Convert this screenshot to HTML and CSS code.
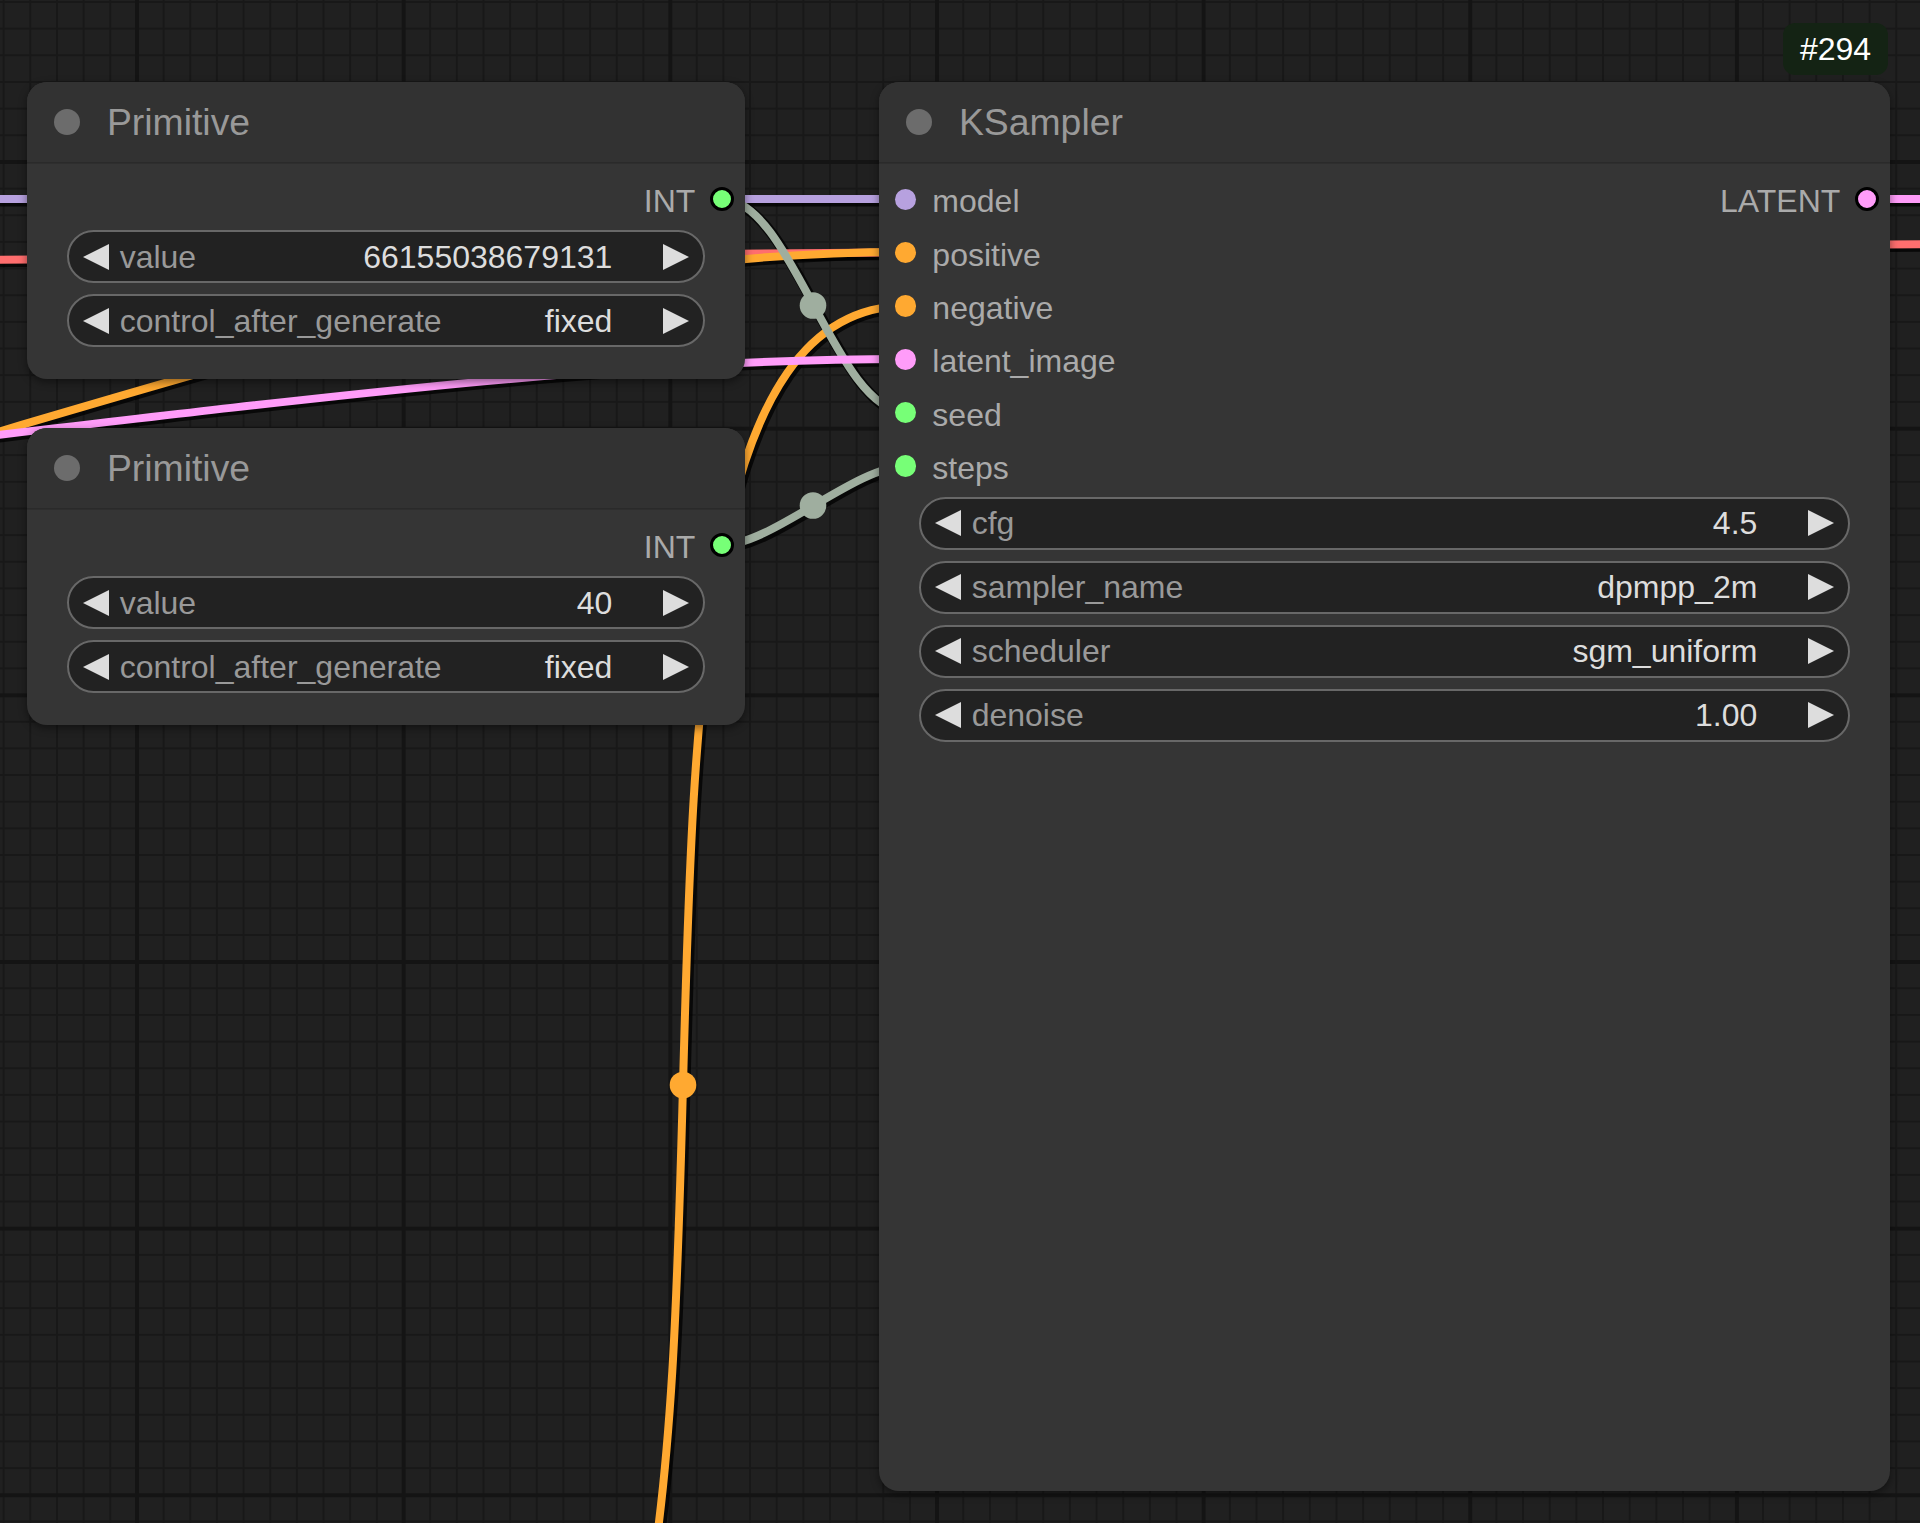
FILE: index.html
```html
<!DOCTYPE html>
<html lang="en">
<head>
<meta charset="utf-8">
<title>ComfyUI – KSampler</title>
<link rel="stylesheet" href="styles.css">
</head>
<body>
<div class="canvas">
  <svg class="links" width="1920" height="1523" viewBox="0 0 1920 1523">
    <g class="shadow">
      <path d="M-20 260 L1940 244"/>
      <path d="M-20 199 L906 199"/>
      <path d="M-200 490 C300 345 560 252 906 252"/>
      <path d="M460 1864 C865 1864 501 306 906 306"/>
      <path d="M722 199 C792 199 835.3 412 906 412"/>
      <path d="M722 545 C772 545 855.5 466 906 466"/>
      <path d="M-300 470 C300 400 600 359 906 359"/>
      <path d="M1866 199 L1940 199"/>
    </g>
    <path class="link vae" d="M-20 260 L1940 244"/>
    <path class="link model" d="M-20 199 L906 199"/>
    <path class="link cond" d="M-200 490 C300 345 560 252 906 252"/>
    <path class="link cond" d="M460 1864 C865 1864 501 306 906 306"/>
    <circle class="mid cond-fill" cx="683" cy="1085" r="13.3"/>
    <path class="link int" d="M722 199 C792 199 835.3 412 906 412"/>
    <circle class="mid int-fill" cx="813" cy="305.5" r="13.3"/>
    <path class="link int" d="M722 545 C772 545 855.5 466 906 466"/>
    <circle class="mid int-fill" cx="813" cy="505.5" r="13.3"/>
    <path class="link latent" d="M-300 470 C300 400 600 359 906 359"/>
    <path class="link latent" d="M1866 199 L1940 199"/>
  </svg>

  <div class="node node-prim node-prim-a">
    <div class="title"><span class="title-dot"></span><span class="title-text">Primitive</span></div>
    <div class="body">
      <div class="slot-row out-only">
        <div class="output"><span class="slot-label">INT</span><span class="dot dot-out c-int"></span></div>
      </div>
      <div class="widgets">
        <div class="widget"><span class="arrow-l"></span><span class="wlabel">value</span><span class="wvalue">66155038679131</span><span class="arrow-r"></span></div>
        <div class="widget"><span class="arrow-l"></span><span class="wlabel">control_after_generate</span><span class="wvalue">fixed</span><span class="arrow-r"></span></div>
      </div>
    </div>
  </div>

  <div class="node node-prim node-prim-b">
    <div class="title"><span class="title-dot"></span><span class="title-text">Primitive</span></div>
    <div class="body">
      <div class="slot-row out-only">
        <div class="output"><span class="slot-label">INT</span><span class="dot dot-out c-int"></span></div>
      </div>
      <div class="widgets">
        <div class="widget"><span class="arrow-l"></span><span class="wlabel">value</span><span class="wvalue">40</span><span class="arrow-r"></span></div>
        <div class="widget"><span class="arrow-l"></span><span class="wlabel">control_after_generate</span><span class="wvalue">fixed</span><span class="arrow-r"></span></div>
      </div>
    </div>
  </div>

  <div class="node node-ks">
    <div class="title"><span class="title-dot"></span><span class="title-text">KSampler</span></div>
    <div class="body">
      <div class="slot-row">
        <div class="input"><span class="dot c-model"></span><span class="slot-label">model</span></div>
        <div class="output"><span class="slot-label">LATENT</span><span class="dot dot-out c-latent"></span></div>
      </div>
      <div class="slot-row">
        <div class="input"><span class="dot c-cond"></span><span class="slot-label">positive</span></div>
      </div>
      <div class="slot-row">
        <div class="input"><span class="dot c-cond"></span><span class="slot-label">negative</span></div>
      </div>
      <div class="slot-row">
        <div class="input"><span class="dot c-latent"></span><span class="slot-label">latent_image</span></div>
      </div>
      <div class="slot-row">
        <div class="input"><span class="dot c-int"></span><span class="slot-label">seed</span></div>
      </div>
      <div class="slot-row">
        <div class="input"><span class="dot c-int"></span><span class="slot-label">steps</span></div>
      </div>
      <div class="widgets">
        <div class="widget"><span class="arrow-l"></span><span class="wlabel">cfg</span><span class="wvalue">4.5</span><span class="arrow-r"></span></div>
        <div class="widget"><span class="arrow-l"></span><span class="wlabel">sampler_name</span><span class="wvalue">dpmpp_2m</span><span class="arrow-r"></span></div>
        <div class="widget"><span class="arrow-l"></span><span class="wlabel">scheduler</span><span class="wvalue">sgm_uniform</span><span class="arrow-r"></span></div>
        <div class="widget"><span class="arrow-l"></span><span class="wlabel">denoise</span><span class="wvalue">1.00</span><span class="arrow-r"></span></div>
      </div>
    </div>
  </div>

  <div class="badge">#294</div>
</div>
</body>
</html>
```

FILE: styles.css
```css
html, body {
  margin: 0;
  padding: 0;
  width: 1920px;
  height: 1523px;
  overflow: hidden;
  background: #202020;
}

.canvas {
  position: relative;
  width: 1920px;
  height: 1523px;
  overflow: hidden;
  font-family: "Liberation Sans", Arial, sans-serif;
  background-color: #202020;
  background-image:
    linear-gradient(to right, #141414 4px, transparent 4px),
    linear-gradient(to bottom, #141414 4px, transparent 4px),
    linear-gradient(to right, #181818 2px, transparent 2px),
    linear-gradient(to bottom, #181818 2px, transparent 2px);
  background-size:
    266.667px 266.667px,
    266.667px 266.667px,
    26.6667px 26.6667px,
    26.6667px 26.6667px;
  background-position:
    135px 0,
    0 160px,
    2.67px 0,
    0 1px;
}

/* ---------- links ---------- */
.links {
  position: absolute;
  left: 0;
  top: 0;
}
.shadow path {
  fill: none;
  stroke: rgba(0, 0, 0, 0.75);
  stroke-width: 11;
  transform: translate(2px, 2px);
}
.link {
  fill: none;
  stroke-width: 8;
}
.vae { stroke: #ff6e6e; }
.model { stroke: #b7a1df; }
.cond { stroke: #ffa931; }
.int { stroke: #9fae9f; }
.latent { stroke: #ff9cf9; }
.cond-fill { fill: #ffa931; }
.int-fill { fill: #9fae9f; }

/* ---------- nodes ---------- */
.node {
  position: absolute;
  background: #353535;
  border-radius: 20px;
  box-shadow: 0 3px 8px rgba(0, 0, 0, 0.45);
  overflow: hidden;
}
.node-prim { left: 27px; width: 718px; height: 297px; }
.node-prim-a { top: 82px; }
.node-prim-b { top: 428px; }
.node-ks { left: 879px; top: 82px; width: 1011px; height: 1409px; }

.title {
  height: 80px;
  box-sizing: border-box;
  background: #323232;
  box-shadow: 0 1px 0 #2a2a2a, 0 2px 0 #2e2e2e;
  display: flex;
  align-items: center;
  padding-left: 26.67px;
  gap: 26.67px;
  position: relative;
}
.title-dot {
  width: 26.67px;
  height: 26.67px;
  border-radius: 50%;
  background: #6c6c6c;
  flex: none;
}
.title-text {
  font-size: 37.33px;
  line-height: 37.33px;
  padding-top: 2px;
  color: #999999;
  white-space: nowrap;
}

.body {
  padding-top: 10.67px;
}
.slot-row {
  height: 53.33px;
  display: flex;
  align-items: center;
  justify-content: space-between;
}
.slot-row.out-only { justify-content: flex-end; }

.input {
  display: flex;
  align-items: center;
  padding-left: 16px;
  gap: 16px;
}
.output {
  display: flex;
  align-items: center;
  padding-right: 11px;
  gap: 14.67px;
}
.slot-label {
  font-size: 32px;
  line-height: 32px;
  padding-top: 4px;
  color: #aaaaaa;
  white-space: nowrap;
}
.dot {
  width: 21.33px;
  height: 21.33px;
  border-radius: 50%;
  flex: none;
}
.dot-out {
  width: 24px;
  height: 24px;
  box-sizing: border-box;
  border: 3px solid #000;
}
.c-int { background: #77ff77; }
.c-model { background: #b7a1df; }
.c-cond { background: #ffa931; }
.c-latent { background: #ff9cf9; }

/* ---------- widgets ---------- */
.widgets {
  margin: 4px 40px 0;
  display: flex;
  flex-direction: column;
  gap: 10.67px;
}
.widget {
  height: 53.33px;
  box-sizing: border-box;
  border: 2px solid #686868;
  border-radius: 27px;
  background: #222222;
  display: flex;
  align-items: center;
  padding: 0 14px;
  font-size: 32px;
  line-height: 32px;
}
.arrow-l {
  width: 0;
  height: 0;
  border-top: 13.33px solid transparent;
  border-bottom: 13.33px solid transparent;
  border-right: 26.67px solid #dddddd;
  flex: none;
}
.arrow-r {
  width: 0;
  height: 0;
  border-top: 13.33px solid transparent;
  border-bottom: 13.33px solid transparent;
  border-left: 26.67px solid #dddddd;
  flex: none;
}
.wlabel {
  margin-left: 10.67px;
  flex: 1;
  color: #999999;
  white-space: nowrap;
}
.wvalue {
  color: #dddddd;
  margin-right: 50.67px;
  white-space: nowrap;
}

/* ---------- badge ---------- */
.badge {
  position: absolute;
  left: 1783px;
  top: 23px;
  width: 105px;
  height: 52px;
  border-radius: 12px;
  background: #142314;
  color: #ffffff;
  font-size: 32px;
  line-height: 52px;
  text-align: center;
}
```
